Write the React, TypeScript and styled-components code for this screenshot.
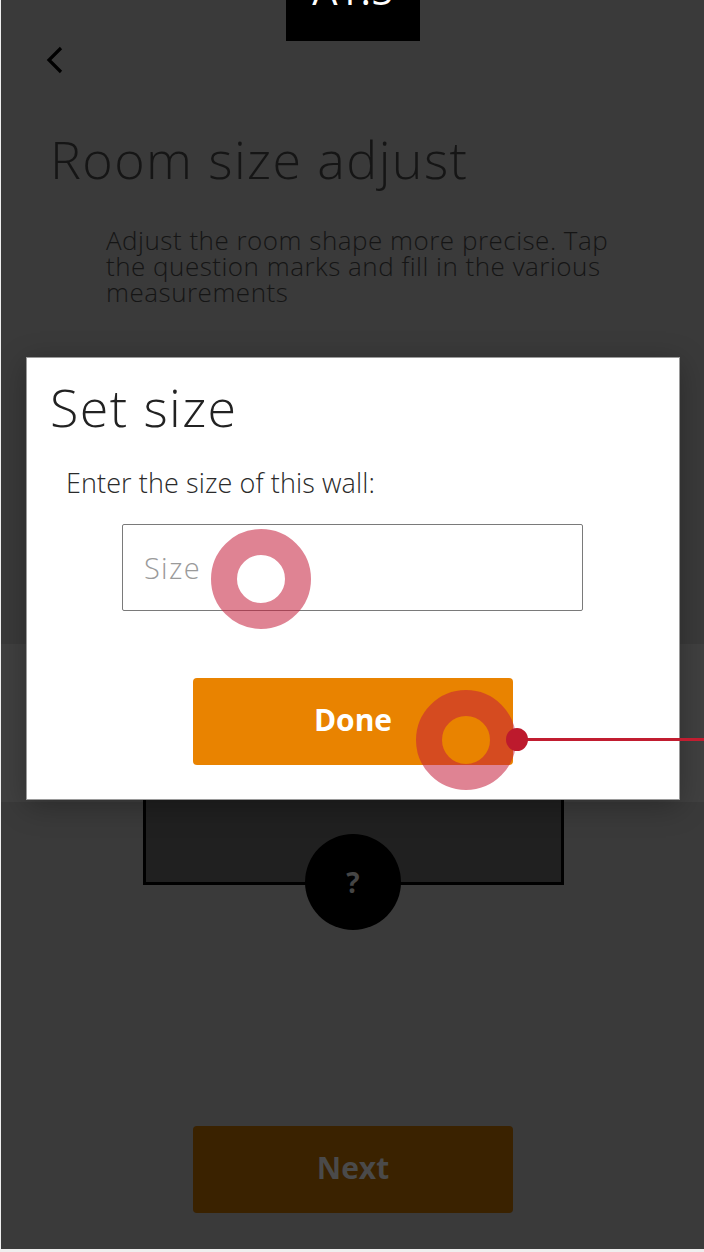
import React from "react";
import styled, { createGlobalStyle } from "styled-components";

const GlobalStyle = createGlobalStyle`
  html, body { margin: 0; padding: 0; background: #efefef; }
  body { font-family: "Open Sans", "Noto Sans", sans-serif; }
  * { box-sizing: border-box; }
`;

const Screen = styled.div`
  position: relative;
  margin-left: 1px;
  width: 703px;
  height: 1249px;
  background: #3a3a3a;
  overflow: hidden;
  display: flex;
  flex-direction: column;
`;

const ScreenLabel = styled.div`
  position: absolute;
  left: 285px;
  top: 0;
  width: 134px;
  height: 41px;
  background: #000;
  color: #fff;
  font-family: "Open Sans", sans-serif;
  font-size: 40px;
  line-height: 40px;
  text-align: center;
  overflow: hidden;
  span { display: block; margin-top: -30px; }
`;

const BackButton = styled.button`
  align-self: flex-start;
  margin: 46px 0 0 42px;
  padding: 0;
  width: 24px;
  height: 28px;
  background: none;
  border: 0;
  display: flex;
  align-items: center;
  justify-content: center;
`;

const PageTitle = styled.h1`
  margin: 55px 0 0 49px;
  font-family: "Open Sans", sans-serif;
  font-weight: 300;
  font-size: 52px;
  line-height: 60px;
  letter-spacing: 1.4px;
  color: #151515;
`;

const Description = styled.p`
  margin: 38px 0 0 105px;
  width: 520px;
  font-family: "Open Sans", sans-serif;
  font-weight: 300;
  font-size: 26px;
  line-height: 26px;
  letter-spacing: 0.5px;
  color: #151515;
`;

const RoomArea = styled.div`
  margin-top: 339px;
  height: 300px;
  background: linear-gradient(#404040 0, #404040 158px, transparent 158px);
  display: flex;
  justify-content: center;
  padding-top: 20px;
`;

const RoomShape = styled.div`
  position: relative;
  width: 421px;
  height: 221px;
  margin-left: 1px;
  background: #202020;
  border: 3px solid #000;
`;

const WallBadge = styled.div`
  position: absolute;
  left: 50%;
  bottom: -48px;
  transform: translateX(-50%);
  width: 96px;
  height: 96px;
  border-radius: 50%;
  background: #000;
  color: #454545;
  font-family: "Open Sans", sans-serif;
  font-weight: 700;
  font-size: 28px;
  display: flex;
  align-items: center;
  justify-content: center;
`;

const Button = styled.button<{ $dim?: boolean }>`
  width: 320px;
  height: 87px;
  border: 0;
  border-radius: 4px;
  background: ${(p) => (p.$dim ? "#3a2200" : "#e98300")};
  color: ${(p) => (p.$dim ? "#4a4a4a" : "#ffffff")};
  font-family: "Open Sans", sans-serif;
  font-weight: 700;
  font-size: 30px;
  display: flex;
  align-items: center;
  justify-content: center;
  padding: 0 0 5px 0;
`;

const Footer = styled.div`
  margin-top: auto;
  padding: 0 0 36px 1px;
  display: flex;
  justify-content: center;
`;

const Dialog = styled.div`
  position: absolute;
  left: 25px;
  top: 357px;
  width: 654px;
  height: 443px;
  background: #fff;
  border: 1px solid #9a9a9a;
  box-shadow: 0 6px 28px rgba(0, 0, 0, 0.28);
  display: flex;
  flex-direction: column;
  padding: 19px 0 0 0;
`;

const DialogTitle = styled.h2`
  margin: 0 0 0 23px;
  font-family: "Open Sans", sans-serif;
  font-weight: 300;
  font-size: 52px;
  line-height: 60px;
  letter-spacing: 1.4px;
  color: #222;
`;

const FieldLabel = styled.label`
  margin: 31px 0 0 39px;
  font-family: "Open Sans", sans-serif;
  font-weight: 300;
  font-size: 27px;
  line-height: 30px;
  letter-spacing: 0.1px;
  color: #2a2a2a;
`;

const SizeInput = styled.input`
  align-self: center;
  margin: 26px 0 0 -1px;
  width: 461px;
  height: 87px;
  border: 1.5px solid #7a7a7a;
  border-radius: 2px;
  padding: 0 0 0 21px;
  font-family: "Open Sans", sans-serif;
  font-weight: 300;
  font-size: 29px;
  letter-spacing: 1.3px;
  color: #333;
  outline: none;
  &::placeholder { color: #9a9a9a; }
`;

const DialogActions = styled.div`
  margin-top: 67px;
  display: flex;
  justify-content: center;
`;

const TapRing = styled.div<{ $x: number; $y: number }>`
  position: absolute;
  left: ${(p) => p.$x - 50}px;
  top: ${(p) => p.$y - 50}px;
  width: 100px;
  height: 100px;
  border-radius: 50%;
  border: 26px solid rgba(196, 30, 58, 0.55);
  pointer-events: none;
`;

const TapDot = styled.div`
  position: absolute;
  left: 505px;
  top: 728px;
  width: 22px;
  height: 23px;
  border-radius: 50%;
  background: #bd1a2d;
`;

const TapLine = styled.div`
  position: absolute;
  left: 515px;
  top: 738px;
  width: 190px;
  height: 3px;
  background: #c11d30;
`;

export default function App() {
  return (
    <>
      <GlobalStyle />
      <Screen>
        <BackButton aria-label="Back">
          <svg width="22" height="28" viewBox="0 0 22 28">
            <path d="M17 2 L5 14 L17 26" fill="none" stroke="#000" strokeWidth="3.2" />
          </svg>
        </BackButton>
        <PageTitle>Room size adjust</PageTitle>
        <Description>
          Adjust the room shape more precise. Tap the question marks and fill in the various
          measurements
        </Description>
        <RoomArea>
          <RoomShape>
            <WallBadge>?</WallBadge>
          </RoomShape>
        </RoomArea>
        <Footer>
          <Button $dim>Next</Button>
        </Footer>

        <Dialog>
          <DialogTitle>Set size</DialogTitle>
          <FieldLabel>Enter the size of this wall:</FieldLabel>
          <SizeInput placeholder="Size" />
          <DialogActions>
            <Button>Done</Button>
          </DialogActions>
        </Dialog>

        <TapRing $x={260} $y={579} />
        <TapRing $x={465} $y={740} />
        <TapLine />
        <TapDot />

        <ScreenLabel>
          <span>A1.5</span>
        </ScreenLabel>
      </Screen>
    </>
  );
}
